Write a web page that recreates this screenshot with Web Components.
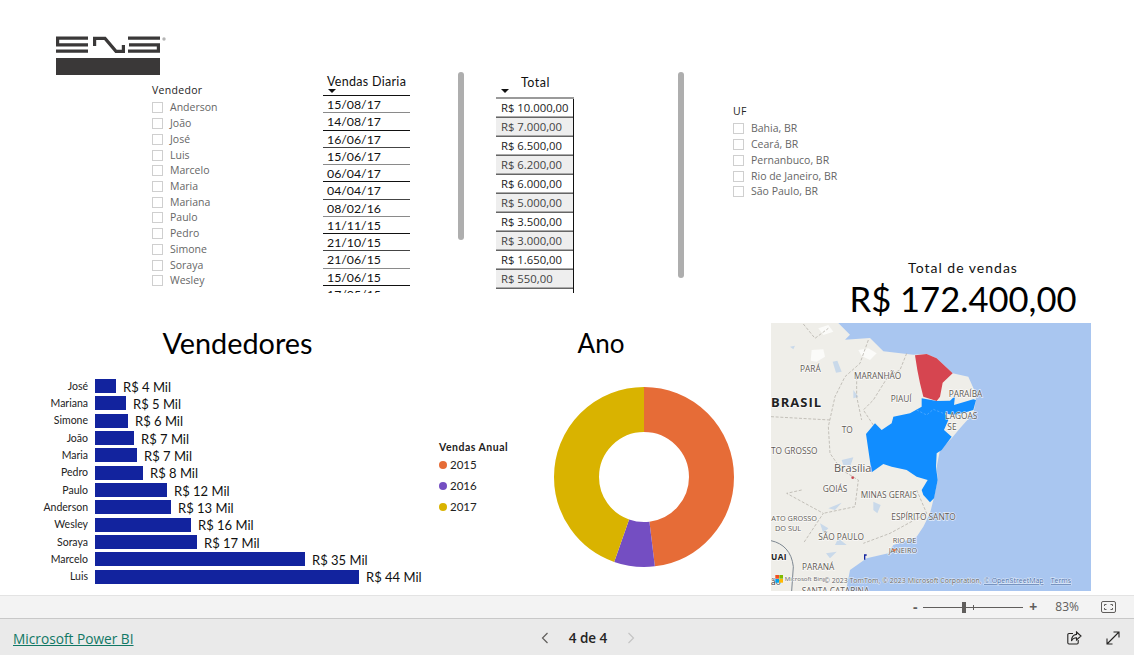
<!DOCTYPE html>
<html lang="pt-BR">
<head>
<meta charset="utf-8">
<title>Relatório de vendas</title>
<style>
  html, body { margin: 0; height: 100%; background: #fff; }
  body {
    display: flex;
    flex-direction: column;
    height: 655px;
    overflow: hidden;
    font-family: "Open Sans", "Liberation Sans", sans-serif;
    --hand: Lato, "Open Sans", sans-serif;
    --ui: "Open Sans", "Liberation Sans", sans-serif;
  }
</style>
</head>
<body>
<report-canvas>
  <ens-logo style="left:56px;top:36px"></ens-logo>

  <slicer-list heading="Vendedor" style="left:152px;top:83px">
    <slicer-item>Anderson</slicer-item><slicer-item>João</slicer-item><slicer-item>José</slicer-item>
    <slicer-item>Luis</slicer-item><slicer-item>Marcelo</slicer-item><slicer-item>Maria</slicer-item>
    <slicer-item>Mariana</slicer-item><slicer-item>Paulo</slicer-item><slicer-item>Pedro</slicer-item>
    <slicer-item>Simone</slicer-item><slicer-item>Soraya</slicer-item><slicer-item>Wesley</slicer-item>
  </slicer-list>

  <date-column heading="Vendas Diaria" style="left:323px;top:72px">
    <date-row>15/08/17</date-row><date-row>14/08/17</date-row><date-row>16/06/17</date-row>
    <date-row>15/06/17</date-row><date-row>06/04/17</date-row><date-row>04/04/17</date-row>
    <date-row>08/02/16</date-row><date-row>11/11/15</date-row><date-row>21/10/15</date-row>
    <date-row>21/06/15</date-row><date-row>15/06/15</date-row><date-row>17/05/15</date-row>
  </date-column>
  <scroll-thumb style="left:458px;top:72px;height:168px"></scroll-thumb>

  <total-column heading="Total" style="left:496px;top:72px">
    <total-row>R$ 10.000,00</total-row><total-row>R$ 7.000,00</total-row><total-row>R$ 6.500,00</total-row>
    <total-row>R$ 6.200,00</total-row><total-row>R$ 6.000,00</total-row><total-row>R$ 5.000,00</total-row>
    <total-row>R$ 3.500,00</total-row><total-row>R$ 3.000,00</total-row><total-row>R$ 1.650,00</total-row>
    <total-row>R$ 550,00</total-row>
  </total-column>
  <scroll-thumb style="left:678px;top:72px;height:206px"></scroll-thumb>

  <slicer-list heading="UF" style="left:733px;top:104px">
    <slicer-item>Bahia, BR</slicer-item><slicer-item>Ceará, BR</slicer-item><slicer-item>Pernanbuco, BR</slicer-item>
    <slicer-item>Rio de Janeiro, BR</slicer-item><slicer-item>São Paulo, BR</slicer-item>
  </slicer-list>

  <kpi-card label="Total de vendas" value="R$ 172.400,00" style="left:835px;top:259px"></kpi-card>

  <bar-chart heading="Vendedores" style="left:30px;top:325px">
    <bar-row label="José" value="R$ 4 Mil" size="21"></bar-row>
    <bar-row label="Mariana" value="R$ 5 Mil" size="31"></bar-row>
    <bar-row label="Simone" value="R$ 6 Mil" size="33"></bar-row>
    <bar-row label="João" value="R$ 7 Mil" size="39"></bar-row>
    <bar-row label="Maria" value="R$ 7 Mil" size="42"></bar-row>
    <bar-row label="Pedro" value="R$ 8 Mil" size="48"></bar-row>
    <bar-row label="Paulo" value="R$ 12 Mil" size="72"></bar-row>
    <bar-row label="Anderson" value="R$ 13 Mil" size="76"></bar-row>
    <bar-row label="Wesley" value="R$ 16 Mil" size="96"></bar-row>
    <bar-row label="Soraya" value="R$ 17 Mil" size="102"></bar-row>
    <bar-row label="Marcelo" value="R$ 35 Mil" size="210"></bar-row>
    <bar-row label="Luis" value="R$ 44 Mil" size="264"></bar-row>
  </bar-chart>

  <donut-chart style="left:439px;top:325px"></donut-chart>
  <map-visual style="left:771px;top:323px"></map-visual>
</report-canvas>
<zoom-bar></zoom-bar>
<page-footer></page-footer>

<script>
  /**
   * Free canvas of the report page, every visual is placed on it.
   */
  class ReportCanvas extends HTMLElement {
    constructor () {
      super()
      this.attachShadow({ mode: 'open' })
      this.shadowRoot.innerHTML = `
        <style>
          :host { display: block; position: relative; flex: 1; overflow: hidden; background: #fff; }
          ::slotted(*) { position: absolute; }
        </style>
        <slot></slot>
      `
    }
  }

  class EnsLogo extends HTMLElement {
    constructor () {
      super()
      this.attachShadow({ mode: 'open' })
      this.shadowRoot.innerHTML = `
        <style>:host { display: block; width: 112px; height: 40px; } svg { display: block; }</style>
        <svg width="112" height="40" viewBox="0 0 112 40">
          <g fill="none" stroke="#3a3838" stroke-width="3.2">
            <path d="M32 2.2H1.6V8.8H32M0 15.2H32"/>
            <path d="M38.6 10V2.4H49L60 15.3H67.4V9"/>
            <path d="M72 2.2H104M73 8.8H102.4V15.2H72"/>
          </g>
          <rect y="22" width="104" height="17" fill="#3a3838"/>
          <circle cx="108" cy="3" r="1.7" fill="#b5b5b5"/>
        </svg>
      `
    }
  }

  class SlicerList extends HTMLElement {
    constructor () {
      super()
      this.attachShadow({ mode: 'open' })
      this.shadowRoot.innerHTML = `
        <style>
          :host { display: block; width: 140px; }
          .title { font: 10.5px/14px var(--ui); color: #252423; height: 17px; letter-spacing: .3px; }
        </style>
        <div class="title"></div>
        <slot></slot>
      `
    }

    connectedCallback () {
      this.shadowRoot.querySelector('.title').textContent = this.getAttribute('heading')
    }
  }

  class SlicerItem extends HTMLElement {
    constructor () {
      super()
      this.attachShadow({ mode: 'open' })
      this.shadowRoot.innerHTML = `
        <style>
          :host { display: flex; align-items: center; gap: 7px; height: 15.73px; font: 10.5px/15px var(--ui); color: #666; white-space: nowrap; }
          i { width: 9px; height: 9px; border: 1px solid #cfcfcf; flex: none; }
        </style>
        <i></i><slot></slot>
      `
    }
  }

  class DateColumn extends HTMLElement {
    constructor () {
      super()
      this.attachShadow({ mode: 'open' })
      this.shadowRoot.innerHTML = `
        <style>
          :host { display: block; width: 87px; height: 221px; overflow: hidden; }
          .head { height: 22px; padding: 1px 0 0 4px; border-bottom: 1px solid #111; font: 12.5px/18px var(--hand); color: #111; position: relative; letter-spacing: .3px; }
          .head i { position: absolute; left: 5px; top: 17px; border: 4px solid transparent; border-top: 4px solid #111; border-bottom: 0; }
        </style>
        <div class="head"><span></span><i></i></div>
        <slot></slot>
      `
    }

    connectedCallback () {
      this.shadowRoot.querySelector('span').textContent = this.getAttribute('heading')
    }
  }

  class DateRow extends HTMLElement {
    constructor () {
      super()
      this.attachShadow({ mode: 'open' })
      this.shadowRoot.innerHTML = `
        <style>
          :host { display: block; box-sizing: border-box; height: 17.28px; padding: 2px 0 0 4px; border-bottom: 1px solid #111; font: 12.3px/14px var(--hand); color: #111; }
          :host(:nth-of-type(3n+1)) { border-bottom-color: #8a8a8a; }
          :host(:nth-of-type(3n+3)) { border-bottom-color: #444; }
        </style>
        <slot></slot>
      `
    }
  }

  class TotalColumn extends HTMLElement {
    constructor () {
      super()
      this.attachShadow({ mode: 'open' })
      this.shadowRoot.innerHTML = `
        <style>
          :host { display: block; width: 78px; height: 221px; overflow: hidden; }
          .head { height: 23px; padding: 2px 0 0 25px; border-bottom: 2px solid #9a9a9a; font: 12.5px/18px var(--hand); color: #111; position: relative; letter-spacing: .5px; }
          .head i { position: absolute; left: 5px; top: 17px; border: 4px solid transparent; border-top: 4px solid #111; border-bottom: 0; }
          .cells { border-right: 1px solid #111; height: 194px; }
        </style>
        <div class="head"><span></span><i></i></div>
        <div class="cells"><slot></slot></div>
      `
    }

    connectedCallback () {
      this.shadowRoot.querySelector('span').textContent = this.getAttribute('heading')
    }
  }

  class TotalRow extends HTMLElement {
    constructor () {
      super()
      this.attachShadow({ mode: 'open' })
      this.shadowRoot.innerHTML = `
        <style>
          :host { display: block; box-sizing: border-box; height: 19px; padding: 1px 0 0 5px; border-bottom: 1px solid #666; font: 11.3px/16px var(--ui); color: #222; box-shadow: inset 0 -1px 0 #aaa; }
          :host(:nth-of-type(even)) { background: #eee; color: #444; }
        </style>
        <slot></slot>
      `
    }
  }

  class ScrollThumb extends HTMLElement {
    constructor () {
      super()
      this.attachShadow({ mode: 'open' })
      this.shadowRoot.innerHTML = `
        <style>:host { display: block; width: 6px; background: #aeaeae; border-radius: 3px; }</style>
      `
    }
  }

  class KpiCard extends HTMLElement {
    constructor () {
      super()
      this.attachShadow({ mode: 'open' })
      this.shadowRoot.innerHTML = `
        <style>
          :host { display: block; width: 256px; text-align: center; color: #111; }
          .label { font: 14px/18px var(--hand); letter-spacing: 1px; }
          .value { font: 34.6px/42px var(--hand); color: #000; white-space: nowrap; margin-top: 1px; }
        </style>
        <div class="label"></div>
        <div class="value"></div>
      `
    }

    connectedCallback () {
      this.shadowRoot.querySelector('.label').textContent = this.getAttribute('label')
      this.shadowRoot.querySelector('.value').textContent = this.getAttribute('value')
    }
  }

  class BarChart extends HTMLElement {
    constructor () {
      super()
      this.attachShadow({ mode: 'open' })
      this.shadowRoot.innerHTML = `
        <style>
          :host { display: block; width: 400px; }
          h2 { margin: 0; height: 52.5px; padding-left: 15px; font: 400 28.8px/36px var(--hand); color: #000; text-align: center; }
        </style>
        <h2></h2>
        <slot></slot>
      `
    }

    connectedCallback () {
      this.shadowRoot.querySelector('h2').textContent = this.getAttribute('heading')
    }
  }

  class BarRow extends HTMLElement {
    constructor () {
      super()
      this.attachShadow({ mode: 'open' })
      this.shadowRoot.innerHTML = `
        <style>
          :host { display: grid; grid-template-columns: 58px auto 1fr; align-items: center; column-gap: 7px; height: 17.33px; white-space: nowrap; }
          .label { font: 10.5px/14px var(--hand); color: #222; text-align: right; margin-top: -1px; }
          .bar { height: 14px; background: #12239e; }
          .value { font: 13px/14px var(--hand); color: #111; margin-top: 1px; }
        </style>
        <span class="label"></span><span class="bar"></span><span class="value"></span>
      `
    }

    connectedCallback () {
      const root = this.shadowRoot
      root.querySelector('.label').textContent = this.getAttribute('label')
      root.querySelector('.value').textContent = this.getAttribute('value')
      root.querySelector('.bar').style.width = this.getAttribute('size') + 'px'
    }
  }

  class DonutChart extends HTMLElement {
    constructor () {
      super()
      this.attachShadow({ mode: 'open' })
      this.shadowRoot.innerHTML = `
        <style>
          :host { display: block; width: 295px; height: 244px; }
          h2 { margin: 0; height: 62px; padding-left: 29px; font: 400 26px/36px var(--hand); color: #000; text-align: center; width: 266px; }
          .body { display: flex; align-items: flex-start; }
          .legend { width: 115px; padding-top: 53px; font: 11.5px/16px var(--hand); color: #222; }
          .legend b { display: block; font-size: 10.5px; line-height: 14px; letter-spacing: .5px; color: #222; }
          .legend div { display: flex; align-items: center; gap: 3px; height: 21px; }
          .legend i { width: 8px; height: 8px; border-radius: 50%; }
          svg { display: block; }
        </style>
        <h2>Ano</h2>
        <div class="body">
          <div class="legend">
            <b>Vendas Anual</b>
            <div><i style="background:#e66c37"></i>2015</div>
            <div><i style="background:#744ec2"></i>2016</div>
            <div><i style="background:#d9b300"></i>2017</div>
          </div>
          <svg width="180" height="180" viewBox="0 0 180 180">
            <g fill="none" stroke-width="45" transform="rotate(-90 90 90)">
              <circle cx="90" cy="90" r="67.5" pathLength="360" stroke="#e66c37" stroke-dasharray="173 187"/>
              <circle cx="90" cy="90" r="67.5" pathLength="360" stroke="#744ec2" stroke-dasharray="26.4 333.6" stroke-dashoffset="-173"/>
              <circle cx="90" cy="90" r="67.5" pathLength="360" stroke="#d9b300" stroke-dasharray="160.6 199.4" stroke-dashoffset="-199.4"/>
            </g>
          </svg>
        </div>
      `
    }
  }

  // the svg uses a 3x coordinate space, one unit is a third of a pixel
  class MapVisual extends HTMLElement {
    constructor () {
      super()
      this.attachShadow({ mode: 'open' })
      this.shadowRoot.innerHTML = `
        <style>
          :host { display: block; width: 320px; height: 268px; }
          svg { display: block; }
          text { font-family: "Open Sans", sans-serif; fill: #5f5a55; font-size: 25px; paint-order: stroke; stroke: rgba(255,255,255,.7); stroke-width: 4px; }
          .b { font-weight: 700; fill: #222; font-size: 39px; letter-spacing: 3px; }
          .sm { font-size: 22px; }
          .att { font-size: 21px; fill: #666; stroke-width: 3px; }
          .bing { font-size: 18.5px; }
          .lnk { fill: #4a6ea8; }
        </style>
        <svg width="320" height="268" viewBox="33 219 960 804">
          <rect x="33" y="219" width="960" height="804" fill="#a9c6f0"/>
          <path fill="#efeee9" d="M33 219H235L270 254L255 269L330 264L370 304L460 314L500 312L530 325L578 370L625 380L645 425L648 450L640 490L600 535L575 565L540 600L530 650L533 690L520 750L510 790L490 830L470 860L400 885L385 910L320 925L270 960L258 1023H33Z"/>
          <g fill="#fbfbf9">
            <path d="M175 235L205 225L220 245L190 255Z"/>
            <path d="M155 300L190 298L195 320L170 335L152 332Z"/>
            <path d="M295 300L325 295L350 310L330 330L305 318Z"/>
          </g>
          <g fill="#c9d9ea">
            <path d="M218 335L232 332L245 365L228 368Z"/>
            <path d="M90 290L105 287L100 298Z"/>
            <path d="M280 420L295 440L280 445ZM245 630L280 622L272 645L250 645ZM340 755L362 765L352 790L340 780ZM205 775L245 758L225 780ZM180 820L205 835L190 850ZM235 865L260 885L225 885ZM198 910L230 905L210 925Z"/>
          </g>
          <g fill="none" stroke="#b9b6ae" stroke-width="2.5" stroke-dasharray="9 5">
            <path d="M130 222L165 265L205 235M325 270L300 340L255 380L225 440L205 530L210 610L245 660L295 690L285 770L190 790M33 500L210 510M390 370L340 450L310 480L340 525M440 310L420 360L390 375M290 380L290 440L305 510M125 720L80 730L190 790L130 880M470 720L500 790L390 850L310 880"/>
          </g>
          <path fill="#d64550" d="M465 316L500 312L530 325L578 370L548 398L540 440L530 453L490 440L480 400L472 360Z"/>
          <path fill="#118dff" d="M485 445L530 453L570 452L585 438L582 465L640 448L648 450L640 480L600 492L578 495L555 490L565 510L552 540L575 560L545 600L530 610L528 650L533 690L522 745L510 757L490 735L485 720L503 690L470 680L440 660L395 650L370 642L335 667L328 620L318 552L345 520L365 540L395 520L400 500L450 490L485 470Z"/>
          <path fill="none" stroke="#5fb0ff" stroke-width="2" stroke-dasharray="7 5" d="M470 480L500 495L520 478L550 490"/>
          <text x="120" y="367">PARÁ</text>
          <text x="282" y="387">MARANHÃO</text>
          <text x="392" y="457">PIAUÍ</text>
          <text x="566" y="440">PARAÍBA</text>
          <text x="556" y="506">LAGOAS</text>
          <text x="562" y="541">SE</text>
          <text class="b" x="33" y="470">BRASIL</text>
          <text x="245" y="548">TO</text>
          <text x="33" y="611">TO GROSSO</text>
          <text x="222" y="666" style="font-size:33px">Brasília</text>
          <text x="188" y="725">GOIÁS</text>
          <text x="302" y="744">MINAS GERAIS</text>
          <text x="394" y="809">ESPÍRITO SANTO</text>
          <text class="sm" x="34" y="812">ATO GROSSO</text>
          <text class="sm" x="45" y="842">DO SUL</text>
          <text x="175" y="869">SÃO PAULO</text>
          <text class="sm" x="398" y="878">RIO DE</text>
          <text class="sm" x="386" y="908">JANEIRO</text>
          <text class="b" x="33" y="929" style="font-size:25px;letter-spacing:1px">UAI</text>
          <text x="126" y="961">PARANÁ</text>
          <text x="33" y="1006" style="fill:#333">ão</text>
          <text x="125" y="1031">SANTA CATARINA</text>
          <path fill="none" stroke="#7d8791" stroke-width="3" d="M33 872C70 880 95 905 100 950L95 1023"/>
          <path fill="#e8743b" d="M396 898h14l-7 7z"/>
          <circle cx="278" cy="683" r="4" fill="#c8484f"/>
          <path fill="#12239e" d="M312 913h8v4h-4v12h-4z"/>
          <g>
            <rect x="46" y="975" width="11" height="11" fill="#f25022"/>
            <rect x="58" y="975" width="11" height="11" fill="#7fba00"/>
            <rect x="46" y="987" width="11" height="11" fill="#00a4ef"/>
            <rect x="58" y="987" width="11" height="11" fill="#ffb900"/>
          </g>
          <text class="att bing" x="74" y="992">Microsoft Bing</text>
          <text class="att" x="192" y="999">© 2023 TomTom, © 2023 Microsoft Corporation,</text>
          <text class="att lnk" x="672" y="999" text-decoration="underline">© OpenStreetMap</text>
          <text class="att lnk" x="872" y="999" text-decoration="underline">Terms</text>
        </svg>
      `
    }
  }

  class ZoomBar extends HTMLElement {
    constructor () {
      super()
      this.attachShadow({ mode: 'open' })
      this.shadowRoot.innerHTML = `
        <style>
          :host { display: flex; align-items: center; justify-content: flex-end; flex: none; box-sizing: border-box; height: 24px; padding-right: 18px; background: #f3f3f3; border-top: 1px solid #e3e3e3; border-bottom: 1px solid #c8c8c8; font: 12px/16px var(--ui); color: #605e5c; }
          .step { width: 10px; text-align: center; font-size: 14px; font-weight: 700; }
          .track { position: relative; width: 100px; height: 1px; background: #605e5c; margin: 0 5px 0 3px; }
          .track i { position: absolute; top: -5px; left: 39px; width: 4px; height: 11px; background: #605e5c; }
          .track b { position: absolute; top: -2px; left: 50px; width: 1px; height: 5px; background: #605e5c; }
          .pct { margin: 0 22px 0 17px; }
          svg { display: block; }
        </style>
        <span class="step">-</span>
        <span class="track"><i></i><b></b></span>
        <span class="step">+</span>
        <span class="pct">83%</span>
        <svg width="15" height="12" viewBox="0 0 15 12" fill="none" stroke="#605e5c">
          <rect x=".5" y=".5" width="14" height="11" rx="1.5"/>
          <path d="M3.5 5V3.5H5.5M9.5 3.5H11.5V5M11.5 7V8.5H9.5M5.5 8.5H3.5V7"/>
        </svg>
      `
    }
  }

  class PageFooter extends HTMLElement {
    constructor () {
      super()
      this.attachShadow({ mode: 'open' })
      this.shadowRoot.innerHTML = `
        <style>
          :host { display: grid; grid-template-columns: 1fr auto 1fr; align-items: center; flex: none; height: 36px; padding: 0 13px; background: #eaeaea; font: 13px/18px var(--ui); color: #252423; }
          a { justify-self: start; margin-top: 3px; color: #117865; text-decoration: underline; font-size: 13.7px; font-weight: 500; }
          .pager { display: flex; align-items: center; gap: 20px; font-weight: 600; font-size: 13.5px; margin: 1px 0 0 42px; }
          .actions { display: flex; justify-content: flex-end; align-items: center; gap: 24px; padding-right: 1px; margin-top: 1px; }
          svg { display: block; }
        </style>
        <a href="#">Microsoft Power BI</a>
        <div class="pager">
          <svg width="8" height="12" viewBox="0 0 8 12" fill="none" stroke="#605e5c" stroke-width="1.2"><path d="M6.5 1L1.5 6L6.5 11"/></svg>
          <span>4 de 4</span>
          <svg width="8" height="12" viewBox="0 0 8 12" fill="none" stroke="#c4c4c4" stroke-width="1.2"><path d="M1.5 1L6.5 6L1.5 11"/></svg>
        </div>
        <div class="actions">
          <svg width="15" height="14" viewBox="0 0 15 14" fill="none" stroke="#252423" stroke-width="1.1">
            <path d="M6 2.5H2A1.2 1.2 0 0 0 .8 3.7V11.8A1.2 1.2 0 0 0 2 13H10A1.2 1.2 0 0 0 11.2 11.8V9"/>
            <path d="M9.5 1L14 5L9.5 9V6.8C7 6.8 5.5 7.8 4.5 10C4.5 6.5 6.5 3.8 9.5 3.4Z"/>
          </svg>
          <svg width="14" height="14" viewBox="0 0 14 14" fill="none" stroke="#252423" stroke-width="1.1">
            <path d="M1 13L13 1M7.5 1H13V6.5M1 7.5V13H6.5"/>
          </svg>
        </div>
      `
    }
  }

  customElements.define('report-canvas', ReportCanvas)
  customElements.define('ens-logo', EnsLogo)
  customElements.define('slicer-list', SlicerList)
  customElements.define('slicer-item', SlicerItem)
  customElements.define('date-column', DateColumn)
  customElements.define('date-row', DateRow)
  customElements.define('total-column', TotalColumn)
  customElements.define('total-row', TotalRow)
  customElements.define('scroll-thumb', ScrollThumb)
  customElements.define('kpi-card', KpiCard)
  customElements.define('bar-chart', BarChart)
  customElements.define('bar-row', BarRow)
  customElements.define('donut-chart', DonutChart)
  customElements.define('map-visual', MapVisual)
  customElements.define('zoom-bar', ZoomBar)
  customElements.define('page-footer', PageFooter)
</script>
</body>
</html>
